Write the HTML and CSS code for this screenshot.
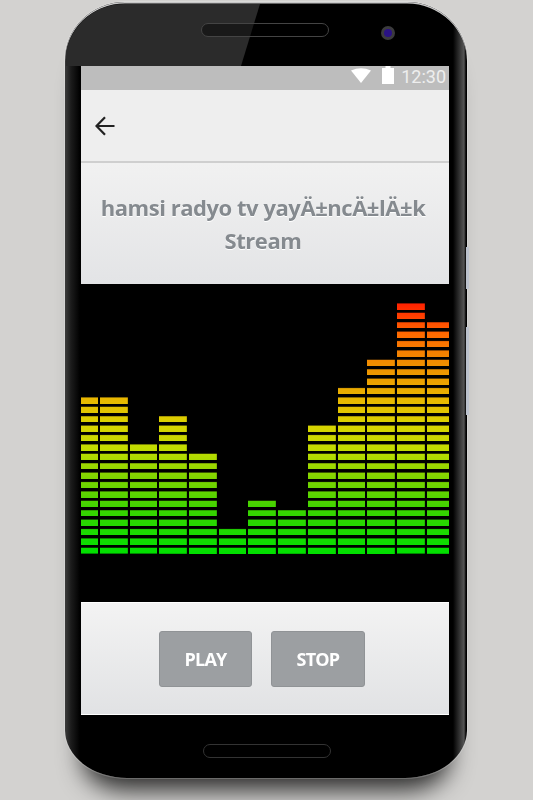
FILE: index.html
```html
<!DOCTYPE html>
<html lang="tr">
<head>
  <meta charset="UTF-8" />
  <title>hamsi radyo tv</title>
  <link rel="stylesheet" href="styles.css">
</head>
<body>
  <div class="phone">
    <div class="gloss"></div>
    <div class="side-btn side-btn-a"></div>
    <div class="side-btn side-btn-b"></div>

    <div class="bezel-top">
      <div class="speaker"></div>
      <div class="camera"></div>
    </div>

    <div class="screen">
      <div class="statusbar">
        <svg class="wifi" width="20" height="15" viewBox="0 0 20 15"><path d="M0 2.500 Q10 -2 20 2.500 L10 15 Z" fill="#fff"/></svg>
        <svg class="battery" width="12" height="18" viewBox="0 0 12 18"><path d="M3.500 0 H8.500 V2 H12 V18 H0 V2 H3.500 Z" fill="#fff"/></svg>
        <span class="clock">12:30</span>
      </div>

      <div class="appbar">
        <svg width="20" height="20" viewBox="0 0 20 20"><path d="M19.500 10 H1.500 M10 1.200 L1.500 10 L10 18.800" fill="none" stroke="#222" stroke-width="2.200"/></svg>
      </div>

      <div class="title">
        <h1>hamsi radyo tv yayÄ±ncÄ±lÄ±k Stream</h1>
      </div>

      <div class="visualizer">
        <div class="bar bar-first" style="--rows:17"></div>
        <div class="bar" style="--rows:17"></div>
        <div class="bar" style="--rows:12"></div>
        <div class="bar" style="--rows:15"></div>
        <div class="bar" style="--rows:11"></div>
        <div class="bar" style="--rows:3"></div>
        <div class="bar" style="--rows:6"></div>
        <div class="bar" style="--rows:5"></div>
        <div class="bar" style="--rows:14"></div>
        <div class="bar" style="--rows:18"></div>
        <div class="bar" style="--rows:21"></div>
        <div class="bar" style="--rows:27"></div>
        <div class="bar bar-last" style="--rows:25"></div>
      </div>

      <div class="controls">
        <button class="btn btn-play">PLAY</button>
        <button class="btn btn-stop">STOP</button>
      </div>
    </div>

    <div class="bezel-bottom">
      <div class="home"></div>
    </div>
  </div>
</body>
</html>
```

FILE: styles.css
```css
html, body {
  margin: 0;
  padding: 0;
  height: 100%;
  overflow: hidden;
}
body {
  background: #d3d2d0;
  font-family: 'Open Sans', 'Liberation Sans', sans-serif;
}
.phone {
  position: relative;
  box-sizing: border-box;
  width: 402px;
  height: 776px;
  margin: 2px 0 0 65px;
  padding: 0 18px 0 16px;
  border-radius: 60px 60px 62px 62px / 58px 58px 48px 48px;
  background: linear-gradient(to right, #3c3c3c 0, #1c1c1c 6px, #000 15px, #000 388px, #555 399px, #000 401px);
  box-shadow: inset 0 1.5px 0 #c8c8c8, 0 0 0 1px rgba(255,255,255,0.2), 0 30px 24px -18px rgba(0,0,0,0.8);
}
.gloss {
  position: absolute;
  top: 2px;
  left: 1px;
  width: 194px;
  height: 62px;
  border-top-left-radius: 58px 56px;
  background: #2b2b2b;
  clip-path: polygon(0 0, 100% 0, 175px 100%, 0 100%);
}
.side-btn {
  position: absolute;
  left: 401px;
  width: 3px;
  background: #bcc2cd;
}
.side-btn-a {
  top: 245px;
  height: 42px;
}
.side-btn-b {
  top: 325px;
  height: 88px;
}
.bezel-top {
  position: relative;
  display: flex;
  align-items: center;
  height: 64px;
  padding-left: 120px;
}
.speaker {
  box-sizing: border-box;
  width: 128px;
  height: 14px;
  margin-top: -8px;
  border: 1.5px solid #444;
  border-radius: 7px;
  background: rgba(0, 0, 0, 0.4);
}
.camera {
  box-sizing: border-box;
  width: 14px;
  height: 14px;
  margin-left: 52px;
  margin-top: -2px;
  border: 3px solid #3b3b3d;
  border-radius: 50%;
  background: #2a1285;
}
.screen {
  position: relative;
  display: flex;
  flex-direction: column;
  height: 649px;
  filter: blur(0.35px);
}
.statusbar {
  display: flex;
  align-items: center;
  justify-content: flex-end;
  height: 24px;
  padding-right: 3px;
  background: #bdbdbd;
}
.wifi {
  margin-right: 11px;
  margin-top: -5px;
}
.battery {
  margin-right: 7px;
  margin-top: -6px;
}
.clock {
  margin-top: -4px;
  font-family: Roboto, sans-serif;
  font-size: 18px;
  color: #eee;
}
.appbar {
  display: flex;
  align-items: center;
  box-sizing: border-box;
  height: 73px;
  padding-left: 14px;
  background: #eee;
  border-bottom: 2px solid #cfcfcf;
}
.title {
  display: flex;
  align-items: center;
  justify-content: center;
  height: 121px;
  padding-right: 4px;
  background: linear-gradient(to bottom, #f1f1f1, #e3e4e6);
}
.title h1 {
  margin: 0;
  font-size: 22px;
  line-height: 33px;
  font-weight: 700;
  letter-spacing: -0.45px;
  text-align: center;
  color: #858a8f;
  text-shadow: 0 1px 0 #fff;
}
.visualizer {
  display: flex;
  align-items: flex-end;
  gap: 2px;
  box-sizing: border-box;
  height: 318px;
  padding-bottom: 48px;
  background: #000;
  overflow: hidden;
  filter: blur(0.6px);
}
.bar {
  flex: 0 0 27.7px;
  height: calc(var(--rows) * 9.4px - 2.2px);
  background: linear-gradient(to top, #00e000 0%, #38d400 17%, #78d400 29%, #c0dc00 41%, #d8d400 51%, #e8b800 61%, #ec9c00 70%, #f08c00 76%, #ff6a00 87%, #ff4000 94%, #ff1c00 100%) bottom / 100% 252px no-repeat;
  -webkit-mask: repeating-linear-gradient(to top, #000 0, #000 5.600px, transparent 6.800px, transparent 9.400px);
  mask: repeating-linear-gradient(to top, #000 0, #000 5.600px, transparent 6.800px, transparent 9.400px);
}
.bar-first {
  flex-basis: 17px;
}
.bar-last {
  flex: 1 1 0;
}
.controls {
  display: flex;
  align-items: center;
  justify-content: center;
  gap: 19px;
  flex: 1;
  padding-right: 6px;
  border-top: 1px solid #fff;
  border-bottom: 1px solid #fff;
  background: linear-gradient(to bottom, #f3f3f3, #e1e2e4);
}
.btn {
  box-sizing: border-box;
  height: 56px;
  padding: 0;
  border: 1px solid #909396;
  border-radius: 3px;
  background: #9c9fa2;
  font-family: 'Open Sans', sans-serif;
  font-size: 18px;
  font-weight: 700;
  letter-spacing: -0.8px;
  color: #fff;
}
.btn-play {
  width: 93px;
}
.btn-stop {
  width: 94px;
}
.bezel-bottom {
  display: flex;
  justify-content: center;
  padding: 29px 0 0 4px;
}
.home {
  box-sizing: border-box;
  width: 128px;
  height: 14px;
  border: 1.5px solid #333;
  border-radius: 7px;
}
```
